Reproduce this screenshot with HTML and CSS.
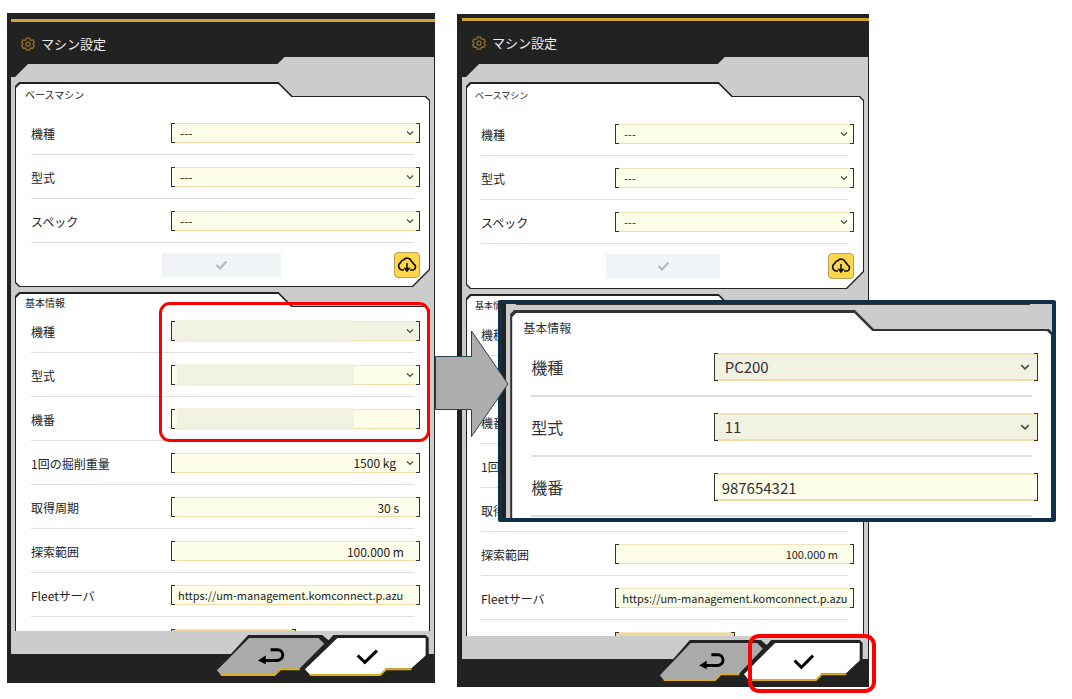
FILE: index.html
```
<!DOCTYPE html>
<html lang="ja">
<head>
    <meta charset="UTF-8">
    <meta name="viewport" content="width=device-width, initial-scale=1.0">
    <title>マシン設定</title>
    <link rel="stylesheet" href="styles.css">
</head>
<body>
    <svg class="defs" aria-hidden="true">
        <symbol id="gear" viewBox="0 0 16 16">
            <path d="M6.2 1.2h3.6l.7 1.9 1.2.7 2-.4 1.5 2.8-1.3 1.6v.9l1.3 1.5-1.6 2.8-2-.4-1.1.7-.7 1.8H6.2l-.7-1.8-1.1-.7-2 .4L.8 10.200l1.3-1.500v-.9L.8 6.200l1.500-2.800 2 .4 1.200-.7z"/>
            <circle cx="8" cy="8.200" r="2.300"/>
        </symbol>
        <symbol id="check" viewBox="0 0 12 10">
            <path d="M1 5l3.500 3.500L11 1.500"/>
        </symbol>
        <symbol id="cloud" viewBox="0 0 20 16">
            <path d="M7 13H5a4 4 0 0 1-1.200-7.500A3 3 0 0 1 6.500 3a4.500 4.500 0 0 1 8 1.500 3.300 3.300 0 0 1 1.800 2.200A3.300 3.300 0 0 1 16 13h-3"/>
            <path d="M10 6v7M8 11.500l2 2.500 2-2.500z"/>
        </symbol>
        <symbol id="back-shape" viewBox="0 0 116 44" preserveAspectRatio="none">
            <path fill="#222" d="M33 0h76l7 6v4L86 40H0v-4z"/>
            <path fill="#aaa" d="M34 3h71l6 6-26 26H66l-6 6H5l-4-5z"/>
            <path fill="none" stroke="#dcae1c" stroke-width="2" d="M5 41h55l6-6h20"/>
            <path fill="none" stroke="#000" stroke-width="3" d="M56 15h7a5.500 5.500 0 0 1 0 11H48"/>
            <path d="M43 26l8-5v9z"/>
        </symbol>
        <symbol id="ok-shape" viewBox="0 0 124 44" preserveAspectRatio="none">
            <path fill="#222" d="M29 0h91l3 3v18l-22 23H3l-6-8z"/>
            <path fill="#fff" d="M33 3h87v18l-14 13H81l-6 7H6l-5-6z"/>
            <path fill="none" stroke="#dcae1c" stroke-width="2" d="M6 41h69l6-6h25"/>
            <path fill="none" stroke="#000" stroke-width="3" d="M53 21l7 7 12-12"/>
        </symbol>
    </svg>

    <main class="board">
        <section class="stage">
            <div class="phone">
                <header class="phone-header">
                    <svg class="gear"><use href="#gear"/></svg>
                    <h1>マシン設定</h1>
                </header>
                <div class="phone-body">
                    <form class="panel panel-base">
                        <h2>ベースマシン</h2>
                        <div class="row">
                            <label for="a-base-kind">機種</label>
                            <span class="field"><select id="a-base-kind"><option>---</option></select></span>
                        </div>
                        <div class="row">
                            <label for="a-base-model">型式</label>
                            <span class="field"><select id="a-base-model"><option>---</option></select></span>
                        </div>
                        <div class="row">
                            <label for="a-base-spec">スペック</label>
                            <span class="field"><select id="a-base-spec"><option>---</option></select></span>
                        </div>
                        <div class="actions">
                            <button type="button" class="apply" aria-label="適用" disabled><svg><use href="#check"/></svg></button>
                            <button type="button" class="download" aria-label="ダウンロード"><svg><use href="#cloud"/></svg></button>
                        </div>
                    </form>
                    <form class="panel panel-info">
                        <h2>基本情報</h2>
                        <div class="row">
                            <label for="a-kind">機種</label>
                            <span class="field locked"><select id="a-kind"><option></option></select><i class="mask"></i></span>
                        </div>
                        <div class="row">
                            <label for="a-model">型式</label>
                            <span class="field"><select id="a-model"><option></option></select><i class="mask"></i></span>
                        </div>
                        <div class="row">
                            <label for="a-serial">機番</label>
                            <span class="field"><input id="a-serial" type="text"><i class="mask"></i></span>
                        </div>
                        <div class="row">
                            <label for="a-weight">1回の掘削重量</label>
                            <span class="field"><select id="a-weight" class="right"><option>1500 kg</option></select></span>
                        </div>
                        <div class="row">
                            <label for="a-cycle">取得周期</label>
                            <span class="field"><input id="a-cycle" class="right seconds" type="text" value="30 s"></span>
                        </div>
                        <div class="row">
                            <label for="a-range">探索範囲</label>
                            <span class="field"><input id="a-range" class="right" type="text" value="100.000 m"></span>
                        </div>
                        <div class="row">
                            <label for="a-fleet">Fleetサーバ</label>
                            <span class="field"><input id="a-fleet" class="url" type="text" value="https://um-management.komconnect.p.azu"></span>
                        </div>
                        <div class="row">
                            <span></span>
                            <button type="button" class="field more" aria-label="詳細"></button>
                        </div>
                    </form>
                </div>
                <footer class="phone-footer">
                    <button type="button" class="back" aria-label="戻る"><svg><use href="#back-shape"/></svg></button>
                    <button type="button" class="ok" aria-label="決定"><svg><use href="#ok-shape"/></svg></button>
                </footer>
            </div>
            <div class="mark mark-fields"></div>
        </section>

        <section class="stage stage-after">
            <div class="phone">
                <header class="phone-header">
                    <svg class="gear"><use href="#gear"/></svg>
                    <h1>マシン設定</h1>
                </header>
                <div class="phone-body">
                    <form class="panel panel-base">
                        <h2>ベースマシン</h2>
                        <div class="row">
                            <label for="b-base-kind">機種</label>
                            <span class="field"><select id="b-base-kind"><option>---</option></select></span>
                        </div>
                        <div class="row">
                            <label for="b-base-model">型式</label>
                            <span class="field"><select id="b-base-model"><option>---</option></select></span>
                        </div>
                        <div class="row">
                            <label for="b-base-spec">スペック</label>
                            <span class="field"><select id="b-base-spec"><option>---</option></select></span>
                        </div>
                        <div class="actions">
                            <button type="button" class="apply" aria-label="適用" disabled><svg><use href="#check"/></svg></button>
                            <button type="button" class="download" aria-label="ダウンロード"><svg><use href="#cloud"/></svg></button>
                        </div>
                    </form>
                    <form class="panel panel-info">
                        <h2>基本情報</h2>
                        <div class="row">
                            <label for="b-kind">機種</label>
                            <span class="field locked"><select id="b-kind"><option></option></select></span>
                        </div>
                        <div class="row">
                            <label for="b-model">型式</label>
                            <span class="field locked"><select id="b-model"><option></option></select></span>
                        </div>
                        <div class="row">
                            <label for="b-serial">機番</label>
                            <span class="field"><input id="b-serial" type="text"></span>
                        </div>
                        <div class="row">
                            <label for="b-weight">1回の掘削重量</label>
                            <span class="field"><select id="b-weight" class="right"><option></option></select></span>
                        </div>
                        <div class="row">
                            <label for="b-cycle">取得周期</label>
                            <span class="field"><input id="b-cycle" class="right seconds" type="text"></span>
                        </div>
                        <div class="row">
                            <label for="b-range">探索範囲</label>
                            <span class="field"><input id="b-range" class="right" type="text" value="100.000 m"></span>
                        </div>
                        <div class="row">
                            <label for="b-fleet">Fleetサーバ</label>
                            <span class="field"><input id="b-fleet" class="url" type="text" value="https://um-management.komconnect.p.azu"></span>
                        </div>
                        <div class="row">
                            <span></span>
                            <button type="button" class="field more" aria-label="詳細"></button>
                        </div>
                    </form>
                </div>
                <footer class="phone-footer">
                    <button type="button" class="back" aria-label="戻る"><svg><use href="#back-shape"/></svg></button>
                    <button type="button" class="ok" aria-label="決定"><svg><use href="#ok-shape"/></svg></button>
                </footer>
            </div>

            <div class="callout">
                <form class="panel">
                    <h2>基本情報</h2>
                    <div class="row">
                        <label for="c-kind">機種</label>
                        <span class="field locked"><select id="c-kind"><option>PC200</option></select></span>
                    </div>
                    <div class="row">
                        <label for="c-model">型式</label>
                        <span class="field locked"><select id="c-model"><option>11</option></select></span>
                    </div>
                    <div class="row">
                        <label for="c-serial">機番</label>
                        <span class="field"><input id="c-serial" type="text" value="987654321"></span>
                    </div>
                </form>
            </div>
            <svg class="arrow" viewBox="0 0 74 108">
                <path d="M.5 26.500h36V1L73 54 36.500 106.500v-27H.5z"/>
            </svg>
            <div class="mark mark-ok"></div>
        </section>
    </main>
</body>
</html>
```
FILE: styles.css
```
* {
    box-sizing: border-box;
}
body {
    min-height: 100vh;
    margin: 0;
    background-color: #fff;
    color: #222;
    font-family: "Noto Sans CJK JP", "Noto Sans", sans-serif;
    font-size: 12px;
}
h1, h2 {
    margin: 0;
    font-weight: normal;
}
button, input, select {
    margin: 0;
    padding: 0;
    border: none;
    border-radius: 0;
    background: none;
    color: inherit;
    font: inherit;
    appearance: none;
}
.defs {
    position: absolute;
    width: 0;
    height: 0;
}
.board {
    display: grid;
    grid-template-columns: 428fr 412fr 181fr;
    column-gap: 22px;
    align-items: start;
    padding: 13px 0 12px 7px;
}
.stage {
    --view: 554px;
    position: relative;
}
.stage-after {
    --view: 559px;
    margin-top: 1px;
}

/* phone */
.phone {
    padding: 0 1px 0 4px;
    background-color: #222;
}
.stage-after .phone {
    padding-left: 5px;
}
.phone-header {
    display: flex;
    align-items: center;
    gap: 6px;
    height: 64px;
    padding: 0 10px 3px;
    margin-right: -1px;
    color: #eee;
    background: linear-gradient(#d0a632, #d0a632) 0 6px / 100% 3px no-repeat #222;
}
.stage-after .phone-header {
    height: 63px;
    padding-bottom: 5px;
    background-position: 0 4px;
}
.phone-header h1 {
    font-size: 13px;
    line-height: 20px;
}
.gear {
    width: 14px;
    height: 14px;
    fill: none;
    stroke: #927023;
    stroke-width: 1.5;
}
.phone-body {
    position: relative;
    height: var(--view);
    padding: 5px 4px 0;
    overflow: hidden;
    background-color: #ccc;
}
/* stepped edge of the header */
.phone-header::after {
    content: "";
    position: absolute;
    left: 4px;
    right: 1px;
    top: 44px;
    height: 20px;
    background-color: #ccc;
    clip-path: polygon(0 100%, 4px 100%, 17px 7px, 63% 7px, calc(63% + 7px) 0, 100% 0, 100% 100%);
}
.stage-after .phone-header::after {
    left: 5px;
    top: 43px;
}

/* panels */
.panel {
    --step: 14px;
    --cut: 17px;
    position: relative;
    isolation: isolate;
    padding: 0 10px 0 16px;
}
.panel::before, .panel::after {
    content: "";
    position: absolute;
    inset: 0;
    z-index: -1;
    background-color: #222;
    clip-path: polygon(4px 0, 63.5% 0, calc(63.5% + var(--step)) var(--step), calc(100% - 4px) var(--step), 100% calc(var(--step) + 4px), 100% calc(100% - var(--cut)), calc(100% - var(--cut)) 100%, 4px 100%, 0 calc(100% - 4px), 0 4px);
}
.panel::after {
    --step: 13px;
    inset: 2px 1px 1px;
    background-color: #fff;
}
.panel h2 {
    margin-left: -6px;
    padding-top: 6px;
    font-size: 10px;
    line-height: 12px;
}
.panel-base h2 {
    padding-top: 7px;
    margin-bottom: 10px;
}
.panel-info h2 {
    padding-top: 5px;
}
.panel-base {
    margin-bottom: 5px;
}
.stage-after .panel {
    padding-left: 15px;
}
.stage-after .panel-base {
    padding-top: 1px;
    padding-bottom: 1px;
}
.stage-after .panel h2 {
    font-size: 9px;
}
.stage-after .panel-info h2 {
    padding-top: 6px;
}
.row, .actions {
    display: grid;
    grid-template-columns: 36% 1fr;
    align-items: center;
    height: 44px;
}
.row {
    background: linear-gradient(#dedede, #dedede) 0 100% / calc(100% - 6px) 1px no-repeat;
}
.row label {
    white-space: nowrap;
}
.field {
    position: relative;
    display: block;
    height: 20px;
    border-top: 1px solid #f3e3ba;
    border-bottom: 1px solid #f0dca8;
    background-color: #fdfeea;
}
.field.locked {
    background-color: #f1f2e2;
}
.field::before, .field::after {
    content: "";
    position: absolute;
    top: -1px;
    bottom: -1px;
    left: 0;
    width: 3px;
    border: 1px solid #3a3426;
    border-right: none;
}
.field::after {
    left: auto;
    right: 0;
    border-right: 1px solid #3a3426;
    border-left: none;
}
.field select, .field input {
    display: block;
    width: 100%;
    height: 100%;
    padding: 0 8px;
    line-height: 18px;
}
.field select {
    padding: 0 24px 0 9px;
    background: url("data:image/svg+xml,%3Csvg xmlns='http://www.w3.org/2000/svg' viewBox='0 0 8 6'%3E%3Cpath d='M1 1.5l3 3 3-3' fill='none' stroke='%23444' stroke-width='1.2'/%3E%3C/svg%3E") right 6px center / 8px 6px no-repeat;
}
.field .right {
    padding-right: 16px;
    text-align: right;
    text-align-last: right;
}
.field select.right {
    padding-right: 24px;
}
.field .seconds {
    padding-right: 21px;
}
.field .url {
    padding: 0 0 0 7px;
    font-size: 11px;
}
.stage-after .phone .field {
    font-size: 11px;
}
.mask {
    position: absolute;
    left: 6px;
    top: -2px;
    width: 71%;
    height: 22px;
    background-color: #f1f2e2;
}
.more {
    width: 50%;
    background-color: #eed9a0;
}
.actions {
    grid-template-columns: 1fr auto;
}
.apply {
    width: 33%;
    height: 24px;
    margin-left: 36%;
    background-color: #f0f4f6;
}
.apply svg {
    display: block;
    width: 13px;
    height: 10px;
    margin: auto;
    fill: none;
    stroke: #b4b8b8;
    stroke-width: 2;
}
.download {
    width: 26px;
    height: 26px;
    padding: 2px;
    border: 1px solid #b3a05c;
    border-radius: 4px;
    background-color: #ffd54a;
}
.download svg {
    display: block;
    width: 20px;
    height: 18px;
    fill: none;
    stroke: #111;
    stroke-width: 1.6;
}

/* bottom bar */
.phone-footer {
    display: flex;
    justify-content: flex-end;
    height: 52px;
    padding: 4px 4px 4px 0;
    background: linear-gradient(#ccc, #ccc) 0 0 / 100% 23px no-repeat #222;
}
.stage-after .phone-footer {
    height: 51px;
}
.phone-footer button {
    height: 43px;
}
.phone-footer svg {
    display: block;
    width: 100%;
    height: 100%;
    overflow: visible;
}
.back {
    width: 27%;
    margin-right: -6%;
}
.ok {
    width: 30%;
}

/* enlarged part of the form */
.callout {
    position: absolute;
    left: 10%;
    top: 286px;
    width: 135.4%;
    height: 222px;
    padding: 6px 0 0 8px;
    overflow: hidden;
    border: 4px solid #122f4a;
    border-radius: 2px;
    background: linear-gradient(#222, #222) 0 0 / 4px 100% no-repeat,
        linear-gradient(#333, #333) 14px 0 / calc(100% - 36px) 1px no-repeat #ccc;
}
.stage-after .callout .panel {
    --step: 19px;
    padding: 0 15px 30px 21px;
    margin-right: -1px;
    color: #333;
}
.callout .panel::before {
    background-color: #333;
}
.callout .panel::after {
    --step: 18px;
    inset: 3px 2px 0;
}
.stage-after .callout h2 {
    margin-left: -8px;
    padding-top: 9px;
    font-size: 12px;
    line-height: 18px;
}
.callout .row {
    height: 60px;
    background-size: calc(100% - 6px) 2px;
    font-size: 16px;
}
.callout .field {
    height: 28px;
    border-width: 2px 0;
    font-size: 15px;
}
.callout .field::before, .callout .field::after {
    top: -2px;
    bottom: -2px;
}
.callout .field select {
    padding-left: 11px;
    background-size: 10px 8px;
    background-position: right 8px center;
}
.callout .field select, .callout .field input {
    line-height: 22px;
}
.arrow {
    position: absolute;
    left: -22px;
    top: 316px;
    width: 74px;
    height: 108px;
    fill: #adadad;
    stroke: #25424f;
}

/* red highlight frames */
.mark {
    position: absolute;
    border: 3px solid #f00;
    border-radius: 11px;
    pointer-events: none;
}
.mark-fields {
    left: 35.5%;
    right: 5px;
    top: 289px;
    height: 140px;
}
.mark-ok {
    right: -7px;
    bottom: -6px;
    width: 31%;
    height: 59px;
    border-width: 4px;
}
```
